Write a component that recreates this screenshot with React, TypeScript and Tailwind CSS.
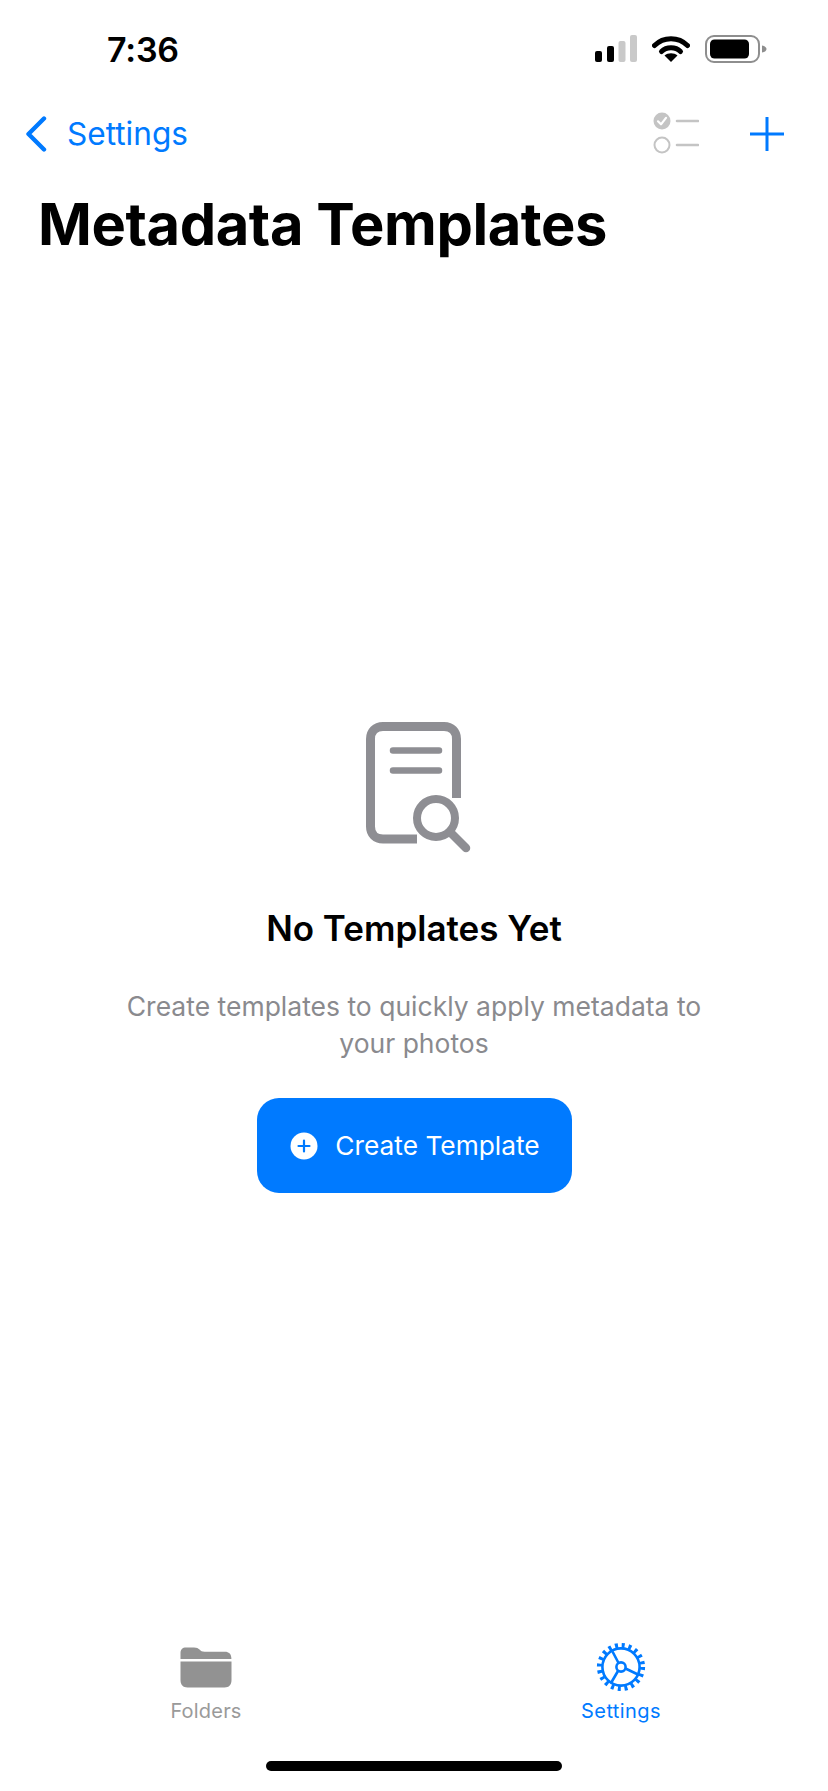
import React from "react";

const Signal = () => (
  <svg width="42" height="28" viewBox="0 0 42 28" className="block">
    <rect x="0" y="16" width="7" height="11" rx="2" fill="#000" />
    <rect x="12" y="11" width="7" height="16" rx="2" fill="#000" />
    <rect x="23.5" y="6" width="7" height="21" rx="2" fill="#c9c9c9" />
    <rect x="35" y="0" width="7" height="27" rx="2" fill="#c9c9c9" />
  </svg>
);

const Wifi = () => (
  <svg width="38" height="28" viewBox="0 0 38 28" className="block">
    <path d="M2.5 10.5C11.5 1.5 26.5 1.5 35.5 10.5" stroke="#000" strokeWidth="5" fill="none" strokeLinecap="round" />
    <path d="M9.5 16.5C14.5 11.5 23.5 11.5 28.5 16.5" stroke="#000" strokeWidth="5" fill="none" strokeLinecap="round" />
    <path d="M19 27L12.5 20.5C16 17.5 22 17.5 25.5 20.5Z" fill="#000" />
  </svg>
);

const Battery = () => (
  <svg width="62" height="28" viewBox="0 0 62 28" className="block">
    <rect x="1" y="1" width="53" height="26" rx="8" fill="none" stroke="#8e8e8e" strokeWidth="2" />
    <rect x="5" y="4.5" width="39" height="19" rx="4.5" fill="#000" />
    <path d="M57 10.5C60 11 61.5 12.5 61.5 14C61.5 15.5 60 17 57 17.5Z" fill="#8e8e8e" />
  </svg>
);

const Checklist = () => (
  <svg width="46" height="44" viewBox="0 0 46 44" className="block">
    <circle cx="9" cy="9" r="8.5" fill="#c4c4c4" />
    <path d="M5 9.3L8 12.3L13 5.8" stroke="#fff" strokeWidth="2.2" fill="none" strokeLinecap="round" strokeLinejoin="round" />
    <circle cx="9" cy="33" r="7.5" fill="none" stroke="#c4c4c4" strokeWidth="2" />
    <path d="M24 9H45M24 33H45" stroke="#c4c4c4" strokeWidth="2.6" strokeLinecap="round" />
  </svg>
);

const DocSearch = () => (
  <svg width="105" height="131" viewBox="0 0 105 131" className="block">
    <path
      d="M51 117H17C9.5 117 4.5 112 4.5 104.5V17C4.5 9.5 9.5 4.5 17 4.5H78C85.5 4.5 90.5 9.5 90.5 17V76"
      fill="none"
      stroke="#8e8e93"
      strokeWidth="9"
    />
    <path d="M27 28.5H73M27 48.5H73" stroke="#8e8e93" strokeWidth="6.5" strokeLinecap="round" />
    <circle cx="70" cy="96" r="19" fill="none" stroke="#8e8e93" strokeWidth="8" />
    <path d="M85 111L100 126" stroke="#8e8e93" strokeWidth="8.5" strokeLinecap="round" />
  </svg>
);

const PlusCircle = () => (
  <svg width="28" height="28" viewBox="0 0 28 28" className="block">
    <circle cx="14" cy="14" r="13.5" fill="#fff" />
    <path d="M14 8.5V19.5M8.5 14H19.5" stroke="#007aff" strokeWidth="2.2" strokeLinecap="round" />
  </svg>
);

const Folder = () => (
  <svg width="52" height="41" viewBox="0 0 52 41" className="block">
    <path d="M0.5 12V6C0.5 2.5 2.5 0.5 6 0.5H14C17 0.5 18 1.2 19.5 2.6C21 4 22 4.8 24.5 4.8H45C48.8 4.8 51 7 51.3 10.5L51.4 12Z" fill="#929292" />
    <path d="M0.5 14.5H51.5V33C51.5 37.8 49 40.5 44.5 40.5H7.5C3 40.5 0.5 37.8 0.5 33Z" fill="#929292" />
  </svg>
);

const Gear = () => (
  <svg width="50" height="50" viewBox="0 0 50 50" className="block">
    <circle cx="25" cy="25" r="21.6" fill="none" stroke="#007aff" strokeWidth="5" strokeDasharray="3 3.79" />
    <circle cx="25" cy="25" r="18.6" fill="none" stroke="#007aff" strokeWidth="2.6" />
    <path d="M16.5 9.5L22.8 21.5M29.5 26.5L43 33M22 29L15 41" stroke="#007aff" strokeWidth="2.6" />
    <circle cx="25" cy="25" r="4.6" fill="none" stroke="#007aff" strokeWidth="2.6" />
  </svg>
);

export default function App() {
  return (
    <div className="flex h-[1791px] w-[828px] flex-col overflow-hidden bg-white font-['Inter',sans-serif]">
      <div className="flex h-[98px] items-start justify-between pl-[107px] pr-[61px] pt-[35px]">
        <span className="text-[34px] font-semibold leading-[30px] tracking-[-0.2px] text-black">7:36</span>
        <div className="flex items-start gap-[15px]">
          <Signal />
          <Wifi />
          <Battery />
        </div>
      </div>

      <div className="flex h-[72px] items-center justify-between pl-[25px] pr-[44px]">
        <div className="flex items-center gap-[20px]">
          <svg width="22" height="36" viewBox="0 0 22 36" className="block">
            <path d="M19 2.5L3.5 18L19 33.5" fill="none" stroke="#007aff" strokeWidth="4.4" strokeLinecap="round" strokeLinejoin="round" />
          </svg>
          <span className="text-[31.6px] leading-[40px] text-[#007aff]">Settings</span>
        </div>
        <div className="flex items-center gap-[51px]">
          <Checklist />
          <svg width="34" height="34" viewBox="0 0 34 34" className="block">
            <path d="M17 0.5V33.5M0.5 17H33.5" stroke="#007aff" strokeWidth="3" strokeLinecap="round" />
          </svg>
        </div>
      </div>

      <h1 className="pl-[38px] pt-[20px] text-[57.8px] font-bold leading-[68px] tracking-[-0.4px] text-black">Metadata Templates</h1>

      <div className="flex flex-1 flex-col items-center pt-[464px]">
        <div className="pl-[8px]">
          <DocSearch />
        </div>
        <h2 className="mt-[54px] text-[35px] font-semibold leading-[42px] text-black">No Templates Yet</h2>
        <p className="mt-[39px] w-[600px] text-center text-[26.5px] leading-[37px] text-[#8a8a8e]">
          Create templates to quickly apply metadata to your photos
        </p>
        <button className="mt-[36px] flex h-[95px] w-[315px] items-center justify-center gap-[17px] rounded-[22px] bg-[#007aff] pl-[2px] text-[26.3px] text-white">
          <PlusCircle />
          <span>Create Template</span>
        </button>
      </div>

      <div className="grid h-[107px] grid-cols-2">
        <div className="flex flex-col items-center pr-[2px]">
          <div className="flex h-[50px] items-center">
            <Folder />
          </div>
          <span className="mt-[6px] text-[20px] leading-[26px] tracking-[0.2px] text-[#9a9a9a]">Folders</span>
        </div>
        <div className="flex flex-col items-center">
          <div className="flex h-[50px] items-center">
            <Gear />
          </div>
          <span className="mt-[6px] text-[20px] leading-[26px] tracking-[0.4px] text-[#007aff]">Settings</span>
        </div>
      </div>

      <div className="flex h-[42px] justify-center pt-[12px]">
        <div className="h-[10px] w-[296px] rounded-full bg-black" />
      </div>
    </div>
  );
}
